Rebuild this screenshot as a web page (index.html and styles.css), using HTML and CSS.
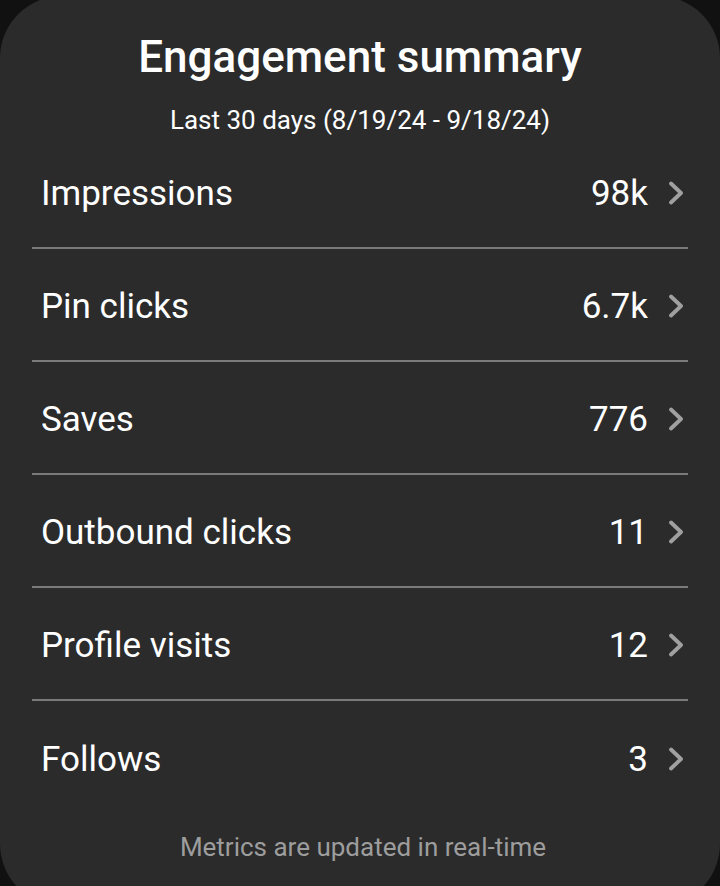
FILE: index.html
```html
<!DOCTYPE html>
<html lang="en">
<head>
<meta charset="utf-8">
<title>Engagement summary</title>
<link rel="stylesheet" href="styles.css">
</head>
<body>
<div class="card">
  <h1 class="title">Engagement summary</h1>
  <p class="subtitle">Last 30 days (8/19/24 - 9/18/24)</p>
  <ul class="list">
    <li class="row"><span class="label">Impressions</span><span class="value">98k</span><svg class="chev" viewBox="0 0 16 24" width="16" height="24"><path d="M3 2.5 L13 12 L3 21.5" /></svg></li>
    <li class="row"><span class="label">Pin clicks</span><span class="value">6.7k</span><svg class="chev" viewBox="0 0 16 24" width="16" height="24"><path d="M3 2.5 L13 12 L3 21.5" /></svg></li>
    <li class="row"><span class="label">Saves</span><span class="value">776</span><svg class="chev" viewBox="0 0 16 24" width="16" height="24"><path d="M3 2.5 L13 12 L3 21.5" /></svg></li>
    <li class="row"><span class="label">Outbound clicks</span><span class="value">11</span><svg class="chev" viewBox="0 0 16 24" width="16" height="24"><path d="M3 2.5 L13 12 L3 21.5" /></svg></li>
    <li class="row"><span class="label">Profile visits</span><span class="value">12</span><svg class="chev" viewBox="0 0 16 24" width="16" height="24"><path d="M3 2.5 L13 12 L3 21.5" /></svg></li>
    <li class="row last"><span class="label">Follows</span><span class="value">3</span><svg class="chev" viewBox="0 0 16 24" width="16" height="24"><path d="M3 2.5 L13 12 L3 21.5" /></svg></li>
  </ul>
  <p class="footer">Metrics are updated in real-time</p>
</div>
</body>
</html>
```
FILE: styles.css
```css
html, body {
  margin: 0;
  padding: 0;
  height: 886px;
  overflow: hidden;
  background: #111111;
  font-family: Roboto, "Noto Sans", sans-serif;
}
.card {
  box-sizing: border-box;
  width: 720px;
  height: 910px;
  margin-top: -4px;
  background: #2b2b2b;
  border-radius: 62px;
  padding-top: 36px;
  display: flex;
  flex-direction: column;
  align-items: stretch;
}
.title {
  margin: 0;
  text-align: center;
  color: #ffffff;
  font-size: 44px;
  font-weight: 500;
  line-height: 50px;
}
.subtitle {
  margin: 22px 0 0;
  text-align: center;
  color: #ffffff;
  font-size: 26px;
  line-height: 32px;
}
.list {
  list-style: none;
  margin: 0 32px;
  padding: 0;
}
.row {
  box-sizing: border-box;
  height: 113px;
  padding: 3px 4px 0 9px;
  border-bottom: 2px solid #7a7a7a;
  display: flex;
  align-items: center;
  color: #ffffff;
  font-size: 35px;
}
.row.last {
  border-bottom: none;
}
.label {
  flex: 1;
}
.value {
  margin-right: 20px;
}
.chev {
  fill: none;
  stroke: #a0a0a0;
  stroke-width: 3.8;
  stroke-linecap: round;
  stroke-linejoin: round;
}
.footer {
  margin: 17px 0 0 6px;
  text-align: center;
  color: #9d9d9d;
  font-size: 26px;
  line-height: 32px;
}
```
